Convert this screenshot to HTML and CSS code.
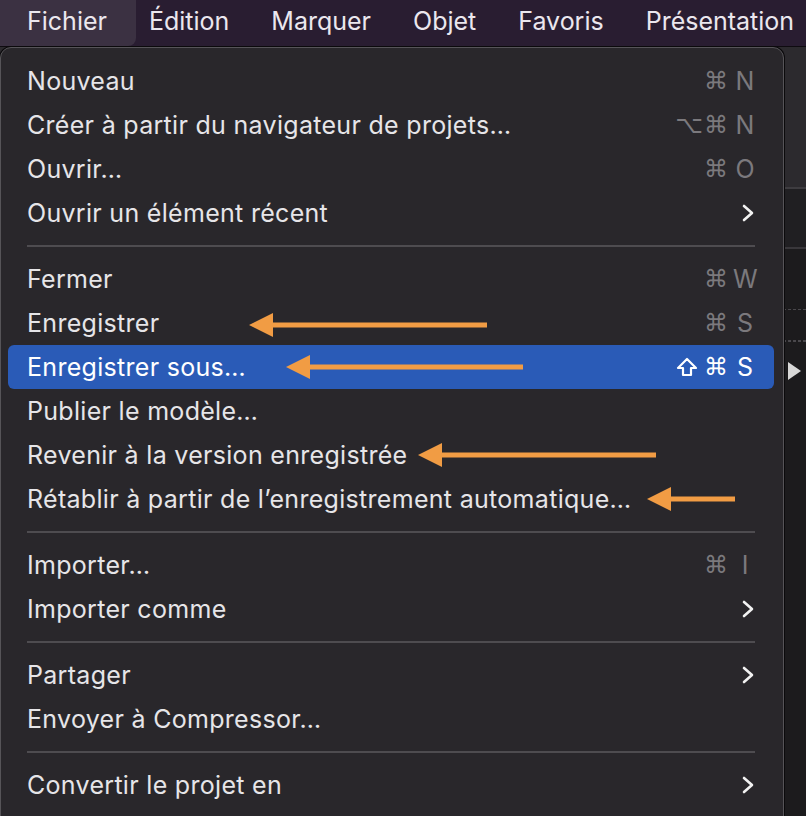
FILE: index.html
```html
<!DOCTYPE html>
<html lang="fr">

<head>
    <meta charset="UTF-8">
    <meta name="viewport" content="width=device-width, initial-scale=1.0">
    <title>Fichier</title>
    <link rel="stylesheet" href="styles.css">
</head>

<body>
    <div class="menubar">
        <div class="bar-item active">Fichier</div>
        <div class="bar-item">Édition</div>
        <div class="bar-item">Marquer</div>
        <div class="bar-item">Objet</div>
        <div class="bar-item">Favoris</div>
        <div class="bar-item">Présentation</div>
    </div>

    <div class="workspace">
        <div class="toolbar"></div>
        <div class="strip"></div>
        <div class="timeline">
            <div class="track"></div>
            <div class="track play-row"><span class="play"></span></div>
            <div class="track"></div>
        </div>
    </div>

    <!-- menu deroulant Fichier -->
    <div class="menu">
        <div class="item"><span class="label">Nouveau</span><span class="keys"><span class="mods">⌘</span><span class="key">N</span></span></div>
        <div class="item"><span class="label">Créer à partir du navigateur de projets…</span><span class="keys"><span class="mods">⌥⌘</span><span class="key">N</span></span></div>
        <div class="item"><span class="label">Ouvrir…</span><span class="keys"><span class="mods">⌘</span><span class="key">O</span></span></div>
        <div class="item"><span class="label">Ouvrir un élément récent</span><svg class="chevron" viewBox="0 0 12 18"><polyline points="2,2 10,9 2,16" /></svg></div>
        <div class="separator"></div>
        <div class="item"><span class="label">Fermer</span><span class="keys"><span class="mods">⌘</span><span class="key">W</span></span></div>
        <div class="item"><span class="label">Enregistrer</span><span class="keys"><span class="mods">⌘</span><span class="key">S</span></span></div>
        <div class="item selected"><span class="label">Enregistrer sous…</span><span class="keys"><svg class="shift" viewBox="0 0 22 20"><polygon points="11,2 20,11 15,11 15,18 7,18 7,11 2,11" /></svg><span class="mods">⌘</span><span class="key">S</span></span></div>
        <div class="item"><span class="label">Publier le modèle…</span></div>
        <div class="item"><span class="label">Revenir à la version enregistrée</span></div>
        <div class="item"><span class="label">Rétablir à partir de l’enregistrement automatique…</span></div>
        <div class="separator"></div>
        <div class="item"><span class="label">Importer…</span><span class="keys"><span class="mods">⌘</span><span class="key">I</span></span></div>
        <div class="item"><span class="label">Importer comme</span><svg class="chevron" viewBox="0 0 12 18"><polyline points="2,2 10,9 2,16" /></svg></div>
        <div class="separator"></div>
        <div class="item"><span class="label">Partager</span><svg class="chevron" viewBox="0 0 12 18"><polyline points="2,2 10,9 2,16" /></svg></div>
        <div class="item"><span class="label">Envoyer à Compressor…</span></div>
        <div class="separator"></div>
        <div class="item"><span class="label">Convertir le projet en</span><svg class="chevron" viewBox="0 0 12 18"><polyline points="2,2 10,9 2,16" /></svg></div>
    </div>

    <!-- fleches d'annotation -->
    <svg class="arrows" width="806" height="816">
        <g class="arrow">
            <line x1="268" y1="325" x2="487" y2="325" />
            <polygon points="249,325 273,313 273,337" />
        </g>
        <g class="arrow">
            <line x1="305" y1="367" x2="523" y2="367" />
            <polygon points="286,367 310,355 310,379" />
        </g>
        <g class="arrow">
            <line x1="437" y1="455" x2="656" y2="455" />
            <polygon points="418,455 442,443 442,467" />
        </g>
        <g class="arrow">
            <line x1="666" y1="499" x2="735" y2="499" />
            <polygon points="647,499 671,487 671,511" />
        </g>
    </svg>
</body>

</html>
```

FILE: styles.css
```css
body {
    margin: 0;
    padding: 0;
    width: 806px;
    height: 816px;
    overflow: hidden;
    background-color: #1c1b1d;
    font-family: "Inter", "Noto Sans", "DejaVu Sans", sans-serif;
    position: relative;
}

.menubar {
    display: flex;
    height: 46px;
    background: #291d31;
    border-bottom: 1px solid #0e0b10;
    color: #ebe7ee;
    font-size: 25px;
}

.bar-item {
    padding: 0 21px;
    line-height: 42px;
    white-space: nowrap;
}

.bar-item.active {
    padding-left: 27px;
    padding-right: 29px;
    margin-right: -8px;
    background: #3b3142;
    border-radius: 0 0 8px 0;
}

.workspace {
    display: flex;
    flex-direction: column;
}

.toolbar {
    height: 140px;
    background: #2c2a2e;
    border-bottom: 2px solid #3e3c40;
}

.strip {
    height: 58px;
    background: #201f22;
    border-bottom: 2px solid #39373b;
}

.timeline {
    padding-top: 60px;
}

.track {
    height: 60px;
    border-top: 1px dashed #4a484c;
}

.play-row {
    display: flex;
    justify-content: flex-end;
    align-items: center;
    border-top: 1px dashed #4a484c;
    height: 0;
    margin-top: -30px;
}

.play {
    width: 0;
    height: 0;
    border-top: 9px solid transparent;
    border-bottom: 9px solid transparent;
    border-left: 13px solid #d8d8d8;
    margin-right: 5px;
    margin-top: 60px;
}

.menu {
    position: absolute;
    left: 0;
    top: 47px;
    width: 784px;
    height: 790px;
    box-sizing: border-box;
    padding: 11px 9px 0 7px;
    background: #29272b;
    border: 1px solid #565458;
    border-radius: 11px;
    box-shadow: 0 0 0 1px #0b0a0c;
    color: #e6e5e8;
    font-size: 25px;
    letter-spacing: 0.3px;
}

.item {
    display: flex;
    align-items: center;
    justify-content: space-between;
    height: 44px;
    padding: 0 17px 0 19px;
    border-radius: 6px;
    white-space: nowrap;
}

.item.selected {
    background: #2a5bb7;
    color: #ffffff;
}

.keys {
    display: flex;
    align-items: center;
    color: #7b797d;
    font-family: "DejaVu Sans", sans-serif;
    font-size: 24px;
    letter-spacing: 0;
}

.mods {
    letter-spacing: 1px;
}

.key {
    width: 24px;
    text-align: center;
    font-family: "Inter", sans-serif;
    font-size: 25px;
    margin-left: 4px;
}

.selected .keys {
    color: #ffffff;
}

.shift {
    width: 22px;
    height: 20px;
    margin-right: 6px;
}

.shift polygon {
    fill: none;
    stroke: #ffffff;
    stroke-width: 2.2;
    stroke-linejoin: round;
}

.chevron {
    width: 12px;
    height: 18px;
    margin-right: 3px;
}

.chevron polyline {
    fill: none;
    stroke: #f2f2f2;
    stroke-width: 2.6;
    stroke-linecap: round;
    stroke-linejoin: round;
}

.separator {
    height: 22px;
    display: flex;
    align-items: center;
    padding: 0 19px 0 19px;
}

.separator::after {
    content: "";
    flex: 1;
    height: 2px;
    background: #4e4c50;
}

.arrows {
    position: absolute;
    left: 0;
    top: 0;
}

.arrow line {
    stroke: #f19c44;
    stroke-width: 5;
}

.arrow polygon {
    fill: #f19c44;
}
```
